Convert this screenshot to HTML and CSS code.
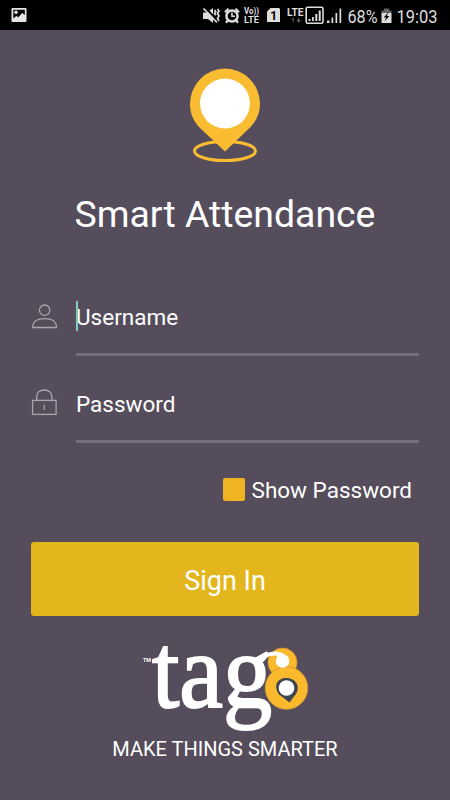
FILE: index.html
```html
<!DOCTYPE html>
<html lang="en">
<head>
    <meta charset="UTF-8">
    <meta name="viewport" content="width=device-width, initial-scale=1.0">
    <title>Smart Attendance</title>
    <link rel="stylesheet" href="styles.css">
</head>
<body>

    <!-- Status bar -->
    <header class="status-bar">
        <svg class="icon-picture" width="16" height="16" viewBox="0 0 16 16">
            <rect x="0.5" y="1" width="15" height="14" rx="1" fill="#e6e6e6"/>
            <path d="M2.3 2.8H13.8V8L11.3 6L7 10.5L5.5 8.7L2.3 11.5Z" fill="#000"/>
            <circle cx="5" cy="5.3" r="1.8" fill="#e6e6e6"/>
        </svg>

        <svg width="241" height="30" viewBox="0 0 241 30" fill="#dedede">
            <!-- Muted speaker -->
            <path d="M0 12.5H4L10 8V23L5 19H0Z"/>
            <path d="M2 7.5L15.5 21.5" stroke="#000" stroke-width="2"/>
            <path d="M0.5 8.5L14 22.5" stroke="#dedede" stroke-width="1.8"/>
            <path d="M11.5 10L12.8 11.8L11.5 13.5L12.8 15.3M14.5 9L16 11L14.5 13.5L16 16L14.5 18.5L16 21" fill="none" stroke="#dedede" stroke-width="1.7"/>
            <!-- Alarm -->
            <circle cx="29" cy="16" r="5.6" fill="none" stroke="#dedede" stroke-width="2.5"/>
            <path d="M22 12.2L25.5 8.8M36 12.2L32.5 8.8M24.8 20.5L23 22.8M33.2 20.5L35 22.8" stroke="#dedede" stroke-width="2.2"/>
            <path d="M29 12.5V16.3H32" fill="none" stroke="#dedede" stroke-width="1.6"/>
            <!-- Network labels -->
            <text class="status-small" x="41" y="14" textLength="15" lengthAdjust="spacingAndGlyphs">Vo))</text>
            <text class="status-small" x="41" y="23" textLength="15" lengthAdjust="spacingAndGlyphs">LTE</text>
            <path d="M67.5 8H76L77 9V22H64V11.5Z"/>
            <text class="status-sim" x="67.3" y="19.5">1</text>
            <text class="status-lte" x="84" y="16" textLength="16.5" lengthAdjust="spacingAndGlyphs">LTE</text>
            <path d="M90 22.5V19.8H88L90.7 17.5V22.5ZM95 18V20.3H93L95.7 22.5L98 20.3H96.3V18Z" fill="#666"/>
            <!-- Signal bars -->
            <rect x="103.2" y="7.2" width="16.8" height="16" rx="1.5" fill="none" stroke="#dedede" stroke-width="1.6"/>
            <path d="M105.5 19H107.5V21H105.5ZM109 17H110.8V21H109ZM112.3 14H114.3V21H112.3ZM115.7 10.5H117.7V21H115.7Z"/>
            <path d="M124 20.5H126.5V23H124ZM128.5 17.5H130.2V23H128.5ZM132.5 13H134.2V23H132.5ZM136.5 8.5H138.2V23H136.5Z"/>
            <!-- Battery and clock -->
            <text class="status-text" x="144.5" y="22.7" textLength="30" lengthAdjust="spacingAndGlyphs">68%</text>
            <path d="M181 8.5H186V10.5H188.5V13H178.5V10.5H181Z" fill="#666"/>
            <rect x="178.5" y="13" width="10" height="10"/>
            <path d="M185.5 12L180.8 17.5H183.2L181.5 21.5L186.3 16H183.8Z" fill="#000"/>
            <text class="status-text" x="193.5" y="22.7" textLength="41" lengthAdjust="spacingAndGlyphs">19:03</text>
        </svg>
    </header>

    <main class="login">
        <svg class="pin" width="72" height="94" viewBox="0 0 72 94">
            <ellipse cx="36" cy="83" rx="30.5" ry="9.5" fill="none" stroke="#fabc30" stroke-width="3"/>
            <path d="M36 83.5L11.5 60.5C4 53 1 45 1 36A35 35.5 0 0 1 71 36C71 45 67.5 53 60.5 60Z" fill="#fabc30"/>
            <circle cx="36" cy="35.5" r="25" fill="#fff"/>
        </svg>

        <h1>Smart Attendance</h1>

        <form class="login-form">
            <div class="field">
                <svg class="field-icon" width="26" height="26" viewBox="0 0 26 26" fill="none" stroke="#aaa4ae" stroke-width="1.3">
                    <circle cx="12.6" cy="6.2" r="5.2"/>
                    <path d="M0.8 23.5V21.7C1.5 16.7 6.5 14.7 12.6 14.7S23.7 16.7 24.4 21.7V23.5Z"/>
                </svg>
                <label class="field-label focused">Username</label>
            </div>

            <div class="field">
                <svg class="field-icon lock" width="26" height="27" viewBox="0 0 26 27" fill="none" stroke="#aaa4ae" stroke-width="1.3">
                    <rect x="0.6" y="11.4" width="23.5" height="14"/>
                    <path d="M4.7 11.2V8C4.7 3.5 8 1 12.3 1S19.9 3.5 19.9 8V11.2M12.3 16V21"/>
                </svg>
                <label class="field-label">Password</label>
            </div>

            <div class="show-password">
                <span class="checkbox"></span>
                <span>Show Password</span>
            </div>

            <button type="button">Sign In</button>
        </form>

        <footer class="brand">
            <svg width="170" height="90" viewBox="0 0 170 90">
                <circle cx="141.5" cy="22.5" r="14.5" fill="#fbb92e" stroke="#cf9732" stroke-width="0.8"/>
                <circle cx="145.5" cy="48" r="21.3" fill="#fbb92e" stroke="#cf9732" stroke-width="0.8"/>
                <path d="M148.5 62.5L138 54.5C132 46 136 38 145.5 38S160 47 154.5 54.5Z" fill="#3f4650"/>
                <circle cx="145.5" cy="48" r="7.8" fill="#fff"/>
                <text class="brand-tm" x="2" y="21.5" textLength="8" lengthAdjust="spacingAndGlyphs">TM</text>
                <text class="brand-name" x="11" y="66.5" textLength="120" lengthAdjust="spacingAndGlyphs">tag</text>
                <!-- Ear of the g, curling into the 8 -->
                <path d="M116 24C122 14 135 10 144 17" fill="none" stroke="#fff" stroke-width="4"/>
                <circle cx="141.5" cy="21" r="6.8" fill="#fff"/>
            </svg>
            <p>MAKE THINGS SMARTER</p>
        </footer>
    </main>

</body>
</html>
```
FILE: styles.css
```css
/* General styling */
* {
    box-sizing: border-box;
}

body {
    margin: 0;
    height: 800px;
    overflow: hidden;
    font-family: Roboto, "Liberation Sans", sans-serif;
    color: #fff;
    background-color: #554d5b;
}

svg {
    display: block;
    flex-shrink: 0;
    overflow: visible;
}

/* Status bar */
.status-bar {
    display: flex;
    justify-content: space-between;
    height: 30px;
    padding: 0 6px 0 11px;
    background-color: #000;
}

.icon-picture {
    margin-top: 7px;
}

.status-text {
    font-size: 19px;
}

.status-small {
    font-size: 9px;
    font-weight: bold;
}

.status-lte {
    font-size: 11px;
    font-weight: bold;
}

.status-sim {
    font-size: 12px;
    font-weight: bold;
    fill: #000;
}

/* Login screen */
.login {
    display: flex;
    flex-direction: column;
    align-items: center;
    padding: 38px 31px 0;
}

h1 {
    margin: 30px 0 0;
    font-size: 37.4px;
    font-weight: 400;
    line-height: 44px;
}

.login-form {
    width: 100%;
    margin-top: 53px;
}

.field {
    display: flex;
    height: 67px;
    margin-bottom: 20px;
}

.field-icon {
    margin: 15px 19px 0 1px;
}

.lock {
    margin-top: 13px;
}

.field-label {
    position: relative;
    flex: 1;
    padding-top: 12px;
    margin-left: -1px;
    font-size: 22.5px;
    line-height: 32px;
    border-bottom: 3px solid #766e7c;
}

/* Text cursor */
.focused::before {
    content: "";
    position: absolute;
    top: 12px;
    left: 0;
    width: 2px;
    height: 30px;
    background-color: #7ccdc0;
}

.show-password {
    display: flex;
    align-items: center;
    justify-content: flex-end;
    gap: 7px;
    height: 30px;
    margin-top: 32px;
    padding-right: 7px;
    font-size: 22.5px;
}

.checkbox {
    width: 22px;
    height: 23px;
    margin-bottom: 2px;
    border-radius: 2px;
    background-color: #f0b323;
}

button {
    display: block;
    width: 100%;
    height: 74px;
    margin-top: 37px;
    padding: 3px 0 0;
    font-family: inherit;
    font-size: 27px;
    color: #fff;
    background-color: #e4b61d;
    border: none;
    border-radius: 3px;
}

/* Brand */
.brand {
    display: flex;
    flex-direction: column;
    align-items: center;
    margin-top: 24px;
}

.brand svg {
    margin-left: 2px;
}

.brand p {
    margin: 7px 0 0;
    font-size: 20px;
    line-height: 24px;
}

.brand-name {
    font-family: "Liberation Serif", serif;
    font-size: 105px;
    fill: #fff;
    stroke: #fff;
    stroke-width: 2px;
}

.brand-tm {
    font-size: 5px;
    font-weight: bold;
    fill: #fff;
}
```
